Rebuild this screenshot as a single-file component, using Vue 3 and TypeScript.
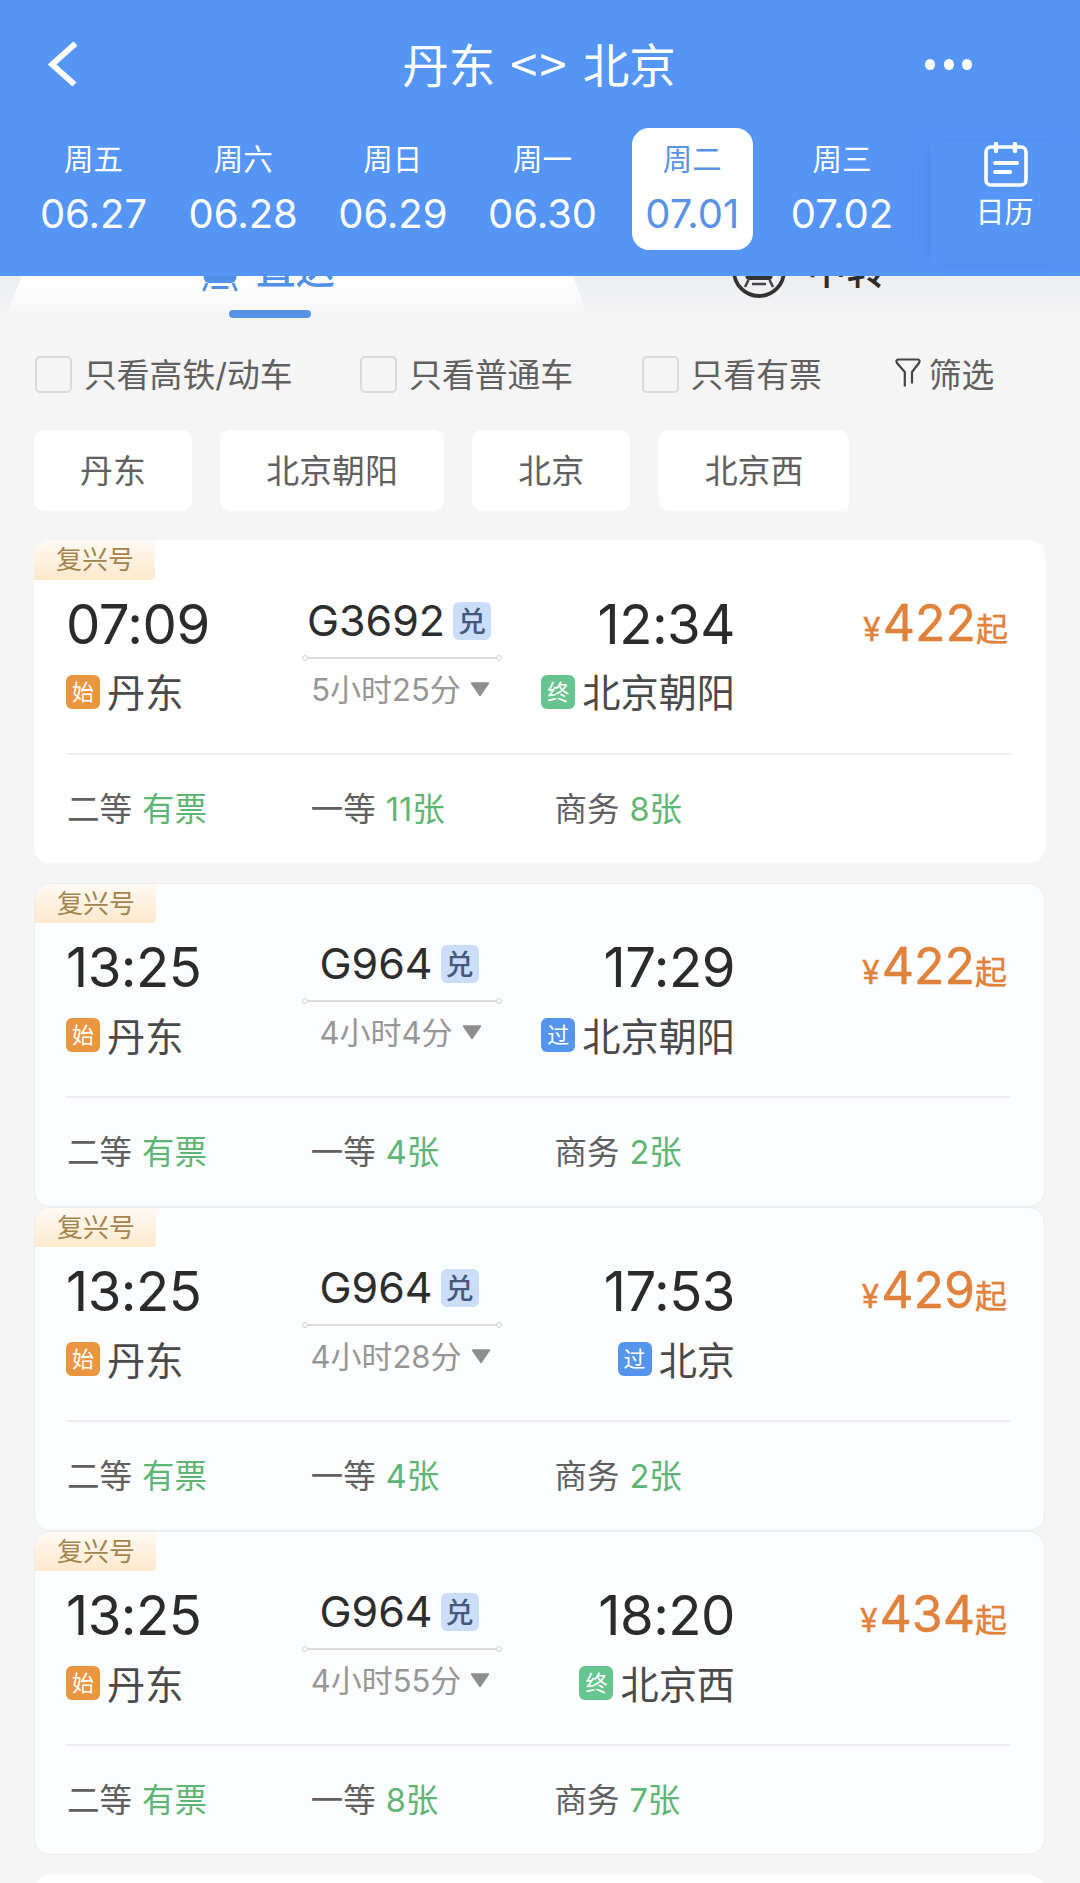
<script setup lang="ts">
interface Day {
  week: string
  date: string
}

interface Seat {
  name: string
  left: string
}

interface Train {
  depart: string
  arrive: string
  code: string
  duration: string
  startStation: string
  endTag: '终' | '过'
  endStation: string
  price: number
  seats: Seat[]
}

const days: Day[] = [
  { week: '周五', date: '06.27' },
  { week: '周六', date: '06.28' },
  { week: '周日', date: '06.29' },
  { week: '周一', date: '06.30' },
  { week: '周二', date: '07.01' },
  { week: '周三', date: '07.02' },
]
const activeDay = '07.01'

const filters: string[] = ['只看高铁/动车', '只看普通车', '只看有票']
const stations: string[] = ['丹东', '北京朝阳', '北京', '北京西']

const makeSeats = (first: string, business: string): Seat[] => [
  { name: '二等', left: '有票' },
  { name: '一等', left: first },
  { name: '商务', left: business },
]

const trains: Train[] = [
  { depart: '07:09', arrive: '12:34', code: 'G3692', duration: '5小时25分', startStation: '丹东', endTag: '终', endStation: '北京朝阳', price: 422, seats: makeSeats('11张', '8张') },
  { depart: '13:25', arrive: '17:29', code: 'G964', duration: '4小时4分', startStation: '丹东', endTag: '过', endStation: '北京朝阳', price: 422, seats: makeSeats('4张', '2张') },
  { depart: '13:25', arrive: '17:53', code: 'G964', duration: '4小时28分', startStation: '丹东', endTag: '过', endStation: '北京', price: 429, seats: makeSeats('4张', '2张') },
  { depart: '13:25', arrive: '18:20', code: 'G964', duration: '4小时55分', startStation: '丹东', endTag: '终', endStation: '北京西', price: 434, seats: makeSeats('8张', '7张') },
]
</script>

<template>
  <div class="page">
    <header class="header">
      <div class="nav">
        <svg class="back" width="30" height="44" viewBox="0 0 30 44">
          <path d="M27.500 1.500 4 22.500 26.500 42.500" fill="none" stroke="#fff" stroke-width="5.800" />
        </svg>
        <h1 class="title">丹东<span class="swap">&lt;&gt;</span>北京</h1>
        <div class="more"><i></i><i></i><i></i></div>
      </div>
      <div class="dates">
        <div v-for="d in days" :key="d.date" class="day" :class="{ active: d.date === activeDay }">
          <span class="week">{{ d.week }}</span>
          <span class="date">{{ d.date }}</span>
        </div>
        <div class="calendar">
          <svg width="44" height="45" viewBox="0 0 44 45" fill="none" stroke="#fff" stroke-width="3.600" stroke-linecap="round">
            <rect x="2" y="5" width="40" height="38" rx="5" />
            <path d="M12 2v7M31 2v7" stroke-width="4.400" />
            <path d="M11 21h22M11 30h15" stroke-width="4" />
          </svg>
          <span>日历</span>
        </div>
      </div>
    </header>

    <div class="tabs">
      <div class="tab-shape"></div>
      <div class="tab selected">
        <svg width="36" height="48" viewBox="0 0 36 48">
          <rect x="1.500" y="4" width="33" height="34" rx="6" fill="#4f8fe8" />
          <path d="M5 38 1.500 46M31 38l3.500 8M9.500 42.500h17" fill="none" stroke="#4f8fe8" stroke-width="2.800" />
        </svg>
        <span>直达</span>
        <i class="underline"></i>
      </div>
      <div class="tab">
        <svg class="ring" width="56" height="60" viewBox="0 0 56 60">
          <circle cx="28" cy="32" r="25" fill="none" stroke="#333" stroke-width="3.800" />
          <rect x="14.500" y="14" width="27" height="27" rx="4" fill="#333" />
          <path d="M17.500 41l-3.500 7M38.500 41l3.500 7M21 45h14" fill="none" stroke="#444" stroke-width="2.600" />
        </svg>
        <span>中转</span>
      </div>
    </div>

    <div class="filters">
      <label v-for="f in filters" :key="f" class="check"><i></i><span>{{ f }}</span></label>
      <div class="sift">
        <svg width="26" height="30" viewBox="0 0 26 30" fill="none" stroke="#444" stroke-width="2.200" stroke-linejoin="round">
          <path d="M9.800 28.500V14L2 5Q0.500 2 3 1.500H23Q25.500 2 24 5L17 14V25.500" />
        </svg>
        <span>筛选</span>
      </div>
    </div>

    <div class="stations">
      <span v-for="s in stations" :key="s" class="chip">{{ s }}</span>
    </div>

    <main class="list">
      <article v-for="(t, i) in trains" :key="i" class="card" :class="{ grouped: i > 0 }">
        <div class="brand">复兴号</div>
        <div class="trip">
          <div class="end">
            <div class="time">{{ t.depart }}</div>
            <div class="station"><b class="tag start">始</b>{{ t.startStation }}</div>
          </div>
          <div class="mid">
            <div class="code">{{ t.code }}<b>兑</b></div>
            <div class="line"></div>
            <div class="duration"><span>{{ t.duration }}</span><svg width="20" height="15" viewBox="0 0 20 15"><path d="M1.500 1h17L10 13.500z" fill="#8e8e8e" stroke="#8e8e8e" stroke-width="1.500" stroke-linejoin="round" /></svg></div>
          </div>
          <div class="end arrive">
            <div class="time">{{ t.arrive }}</div>
            <div class="station"><b class="tag" :class="t.endTag === '终' ? 'final' : 'pass'">{{ t.endTag }}</b>{{ t.endStation }}</div>
          </div>
          <div class="price"><small>¥</small>{{ t.price }}<em>起</em></div>
        </div>
        <div class="seats">
          <div v-for="s in t.seats" :key="s.name" class="seat">{{ s.name }}<span>{{ s.left }}</span></div>
        </div>
      </article>
      <article class="card next"></article>
    </main>
  </div>
</template>

<style>
body {
  margin: 0;
  background: #f5f5f5;
}
</style>

<style scoped>
.page {
  width: 1080px;
  height: 1883px;
  overflow: hidden;
  background: #f5f5f5;
  font-family: Inter, 'Noto Sans CJK SC', sans-serif;
  color: #555;
}

i, em, b {
  font-style: normal;
  font-weight: 400;
}

.header {
  position: relative;
  z-index: 2;
  height: 276px;
  box-sizing: border-box;
  background: #5595f6;
  color: #fff;
}

.nav {
  height: 128px;
  display: flex;
  align-items: center;
  box-sizing: border-box;
  padding: 0 108px 0 48px;
}

.back {
  margin-top: -1px;
}

.title {
  flex: 1;
  margin: 0;
  padding: 0 0 4px 75px;
  text-align: center;
  font-family: 'Noto Sans CJK SC', sans-serif;
  font-size: 46.500px;
  line-height: 60px;
  font-weight: 400;
}

.swap {
  display: inline-block;
  margin: 0 14px 0 15px;
  font-size: 49px;
  letter-spacing: 2px;
}

.more {
  display: flex;
  gap: 8.500px;
}

.more i {
  width: 10px;
  height: 11px;
  border-radius: 50%;
  background: #fff;
}

.dates {
  height: 148px;
  display: flex;
  padding-left: 33px;
}

.day {
  width: 121px;
  height: 122px;
  margin-right: 28.700px;
  border-radius: 17px;
  display: flex;
  flex-direction: column;
  align-items: center;
}

.day.active {
  background: #fff;
  color: #5a93e6;
}

.week {
  margin-top: 13px;
  font-size: 29.500px;
  line-height: 36px;
}

.date {
  margin-top: 16px;
  font-size: 40px;
  line-height: 42px;
}

.calendar {
  flex: 1;
  margin-top: 14px;
  height: 122px;
  display: flex;
  flex-direction: column;
  align-items: center;
  box-sizing: border-box;
  box-shadow: -10px 0 16px -8px rgba(45, 105, 200, 0.35);
}

.calendar span {
  margin-top: 8px;
  margin-right: 2px;
  font-size: 29px;
  line-height: 36px;
}

.tabs {
  position: relative;
  height: 44px;
  display: flex;
  background: linear-gradient(#eceef1, #f5f5f5);
}

.tab-shape {
  position: absolute;
  inset: 0 auto 0 0;
  width: 590px;
  background: linear-gradient(#fff, #f5f5f5);
  clip-path: polygon(22px 0, 573px 0, 589px 44px, 4px 44px);
}

.tab {
  position: relative;
  flex: 1;
  display: flex;
  justify-content: center;
  align-items: center;
  box-sizing: border-box;
  height: 60px;
  margin-top: -37px;
  padding-right: 3px;
  color: #2d2d2d;
  font-size: 39.500px;
  font-weight: 500;
}

.tab span {
  margin-top: -6px;
}

.tab.selected {
  color: #4f8fe8;
}

.tab svg {
  margin-right: 18px;
}

.tab .ring {
  margin-right: 20px;
}

.underline {
  position: absolute;
  left: 229px;
  bottom: -19px;
  width: 82px;
  height: 8px;
  border-radius: 4px;
  background: #5893ea;
}

.filters {
  display: flex;
  align-items: center;
  height: 48px;
  margin-top: 30px;
  padding-left: 35px;
  font-size: 32.800px;
  color: #606060;
}

.check {
  display: flex;
  align-items: center;
  white-space: nowrap;
}

.check span,
.sift span {
  margin-top: -3px;
}

.check i {
  width: 37px;
  height: 37px;
  box-sizing: border-box;
  border: 2.500px solid #dadada;
  border-radius: 5px;
  margin-right: 12px;
}

.check:nth-child(2) {
  margin-left: 67.500px;
}

.check:nth-child(3) {
  margin-left: 68.500px;
}

.sift {
  display: flex;
  align-items: center;
  margin-left: 73px;
  gap: 8px;
}

.sift svg {
  margin-top: -2px;
}

.stations {
  display: flex;
  gap: 28.500px;
  margin-top: 32px;
  padding-left: 34px;
}

.chip {
  height: 81px;
  line-height: 83px;
  padding: 0 46px;
  border-radius: 10px;
  background: #fff;
  font-size: 32.900px;
  color: #606060;
}

.list {
  display: flex;
  flex-direction: column;
  padding: 28.500px 35px 0 34px;
}

.card {
  height: 323px;
  flex: none;
  box-sizing: border-box;
  border-radius: 16px;
  background: #fff;
  overflow: hidden;
}

.card.grouped {
  height: 324px;
  border: 1px solid #ebedf0;
  background: #fcfdff;
}

.card:nth-child(2) {
  margin-top: 20.500px;
}

.card.next {
  margin-top: 20px;
}

.brand {
  width: 121px;
  height: 40px;
  box-sizing: border-box;
  padding-left: 22px;
  border-radius: 0 0 4px 0;
  background: linear-gradient(#fffaf4, #fde9cc);
  color: #a5844c;
  font-size: 26px;
  line-height: 39px;
}

.grouped .brand {
  height: 39px;
}

.trip {
  height: 173px;
  margin: 0 34px 0 32px;
  display: flex;
  border-bottom: 2px solid #ededef;
}

.grouped .trip {
  margin: 0 34px 0 31px;
}

.end {
  width: 236px;
}

.time {
  margin-top: 14px;
  height: 60px;
  line-height: 60px;
  font-size: 54.500px;
  letter-spacing: -0.500px;
  color: #2b2b2b;
}

.station {
  display: flex;
  align-items: center;
  height: 46px;
  margin-top: 14px;
  font-size: 38.200px;
  color: #4a4a4a;
  white-space: nowrap;
}

.tag {
  width: 34px;
  height: 34px;
  line-height: 34px;
  margin-top: 2px;
  margin-right: 7px;
  border-radius: 6px;
  text-align: center;
  font-size: 22px;
  color: #fff;
}

.start {
  background: #ea9540;
}

.final {
  background: #66c48e;
}

.pass {
  background: #5494ec;
}

.mid {
  width: 200px;
  display: flex;
  flex-direction: column;
  align-items: center;
}

.code {
  display: flex;
  align-items: center;
  height: 44px;
  margin-top: 18px;
  margin-right: 6px;
  font-size: 43px;
  color: #2d2d2d;
}

.code b {
  width: 38px;
  height: 38px;
  line-height: 40px;
  margin-top: 2px;
  margin-left: 8px;
  border-radius: 6px;
  background: #cadefb;
  color: #46587c;
  text-align: center;
  font-size: 28px;
  font-weight: 500;
}

.line {
  position: relative;
  width: 190px;
  height: 2px;
  margin-top: 15px;
  margin-right: 1px;
  background: #dcdcdc;
}

.line::before,
.line::after {
  content: '';
  position: absolute;
  top: -2px;
  width: 4px;
  height: 4px;
  border: 1px solid #cfcfcf;
  border-radius: 50%;
  background: #fff;
}

.line::before {
  left: -5px;
}

.line::after {
  right: -5px;
}

.duration {
  display: flex;
  align-items: center;
  height: 36px;
  margin-top: 13px;
  margin-right: 3px;
  font-size: 31px;
  color: #969696;
  white-space: nowrap;
}

.duration span {
  margin-top: -5px;
}

.duration svg {
  margin-left: 9px;
  margin-top: -1px;
}

.arrive {
  width: 233px;
  display: flex;
  flex-direction: column;
  align-items: flex-end;
}

.price {
  flex: 1;
  margin-top: 13px;
  height: 60px;
  line-height: 60px;
  text-align: right;
  padding-right: 3px;
  font-size: 50px;
  color: #e0823c;
  white-space: nowrap;
  -webkit-text-stroke: 0.400px #e0823c;
}

.price small {
  font-size: 32px;
  margin-right: 2px;
}

.price em {
  font-size: 32px;
}

.seats {
  display: flex;
  padding: 32px 33px 0;
}

.grouped .seats {
  padding-left: 32px;
}

.seat {
  width: 243.700px;
  height: 46px;
  line-height: 46px;
  font-size: 32.500px;
  color: #606060;
}

.seat span {
  margin-left: 10px;
  color: #5fb574;
}
</style>
